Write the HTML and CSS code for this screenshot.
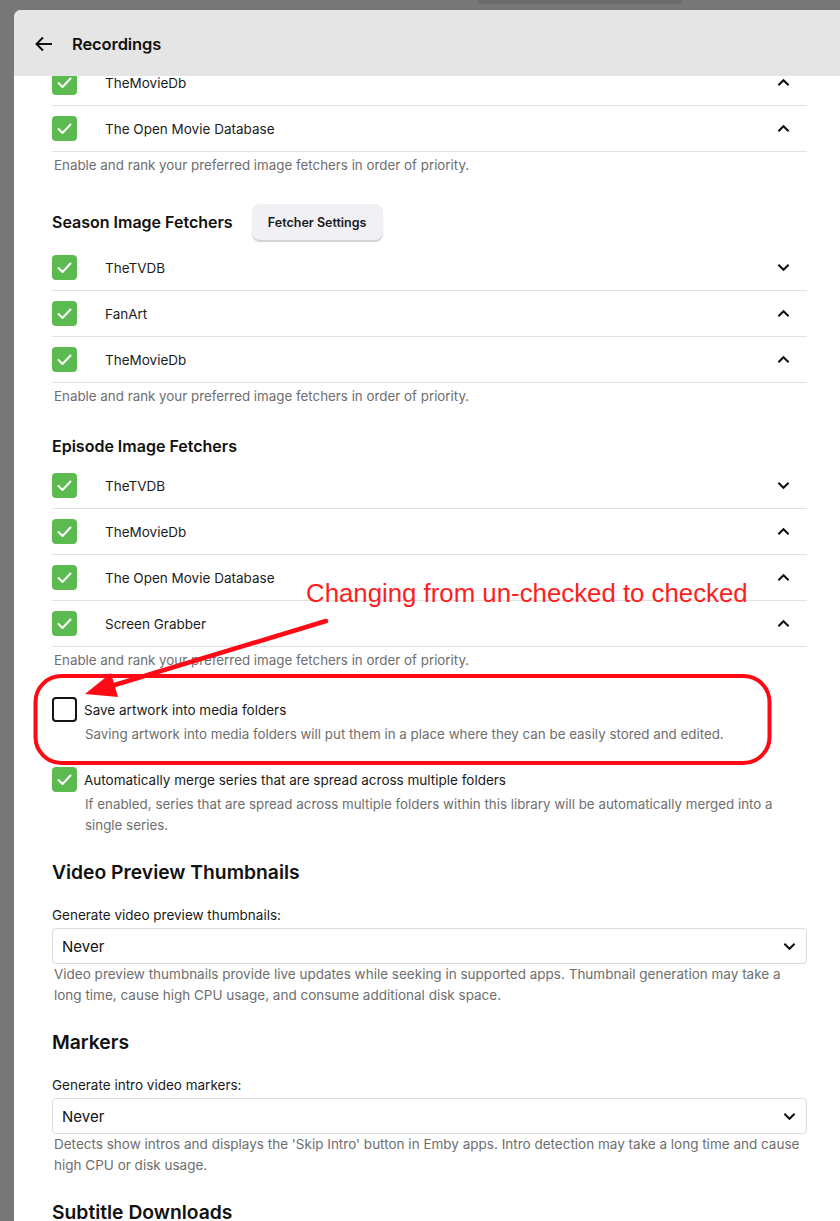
FILE: index.html
```html
<!DOCTYPE html>
<html>
<head>
<meta charset="utf-8">
<link rel="stylesheet" href="styles.css">
</head>
<body>
<div class="topbar"><div class="tab"></div></div>
<div class="panel">
  <header class="header">
    <svg class="back" width="18" height="16" viewBox="0 0 18 16"><path d="M17 8H2M8 1.5L1.5 8L8 14.5" fill="none" stroke="#111" stroke-width="2"/></svg>
    <h1 class="title">Recordings</h1>
  </header>
  <div class="scroll">
    <div class="content">
      <div class="list">
        <div class="row"><span class="cb on"><svg viewBox="0 0 25 25"><path d="M6.5 13L10.5 17L18.5 8.5" /></svg></span><span class="name">TheMovieDb</span><svg class="chev" viewBox="0 0 14 9"><path d="M1.5 7.5L7 2L12.5 7.5"/></svg></div>
        <div class="row"><span class="cb on"><svg viewBox="0 0 25 25"><path d="M6.5 13L10.5 17L18.5 8.5" /></svg></span><span class="name">The Open Movie Database</span><svg class="chev" viewBox="0 0 14 9"><path d="M1.5 7.5L7 2L12.5 7.5"/></svg></div>
      </div>
      <p class="desc">Enable and rank your preferred image fetchers in order of priority.</p>

      <div class="sec-head with-btn"><h2 class="sec-title">Season Image Fetchers</h2><button class="btn">Fetcher Settings</button></div>
      <div class="list">
        <div class="row"><span class="cb on"><svg viewBox="0 0 25 25"><path d="M6.5 13L10.5 17L18.5 8.5" /></svg></span><span class="name">TheTVDB</span><svg class="chev" viewBox="0 0 14 9"><path d="M1.5 1.5L7 7L12.5 1.5"/></svg></div>
        <div class="row"><span class="cb on"><svg viewBox="0 0 25 25"><path d="M6.5 13L10.5 17L18.5 8.5" /></svg></span><span class="name">FanArt</span><svg class="chev" viewBox="0 0 14 9"><path d="M1.5 7.5L7 2L12.5 7.5"/></svg></div>
        <div class="row"><span class="cb on"><svg viewBox="0 0 25 25"><path d="M6.5 13L10.5 17L18.5 8.5" /></svg></span><span class="name">TheMovieDb</span><svg class="chev" viewBox="0 0 14 9"><path d="M1.5 7.5L7 2L12.5 7.5"/></svg></div>
      </div>
      <p class="desc">Enable and rank your preferred image fetchers in order of priority.</p>

      <div class="sec-head"><h2 class="sec-title">Episode Image Fetchers</h2></div>
      <div class="list">
        <div class="row"><span class="cb on"><svg viewBox="0 0 25 25"><path d="M6.5 13L10.5 17L18.5 8.5" /></svg></span><span class="name">TheTVDB</span><svg class="chev" viewBox="0 0 14 9"><path d="M1.5 1.5L7 7L12.5 1.5"/></svg></div>
        <div class="row"><span class="cb on"><svg viewBox="0 0 25 25"><path d="M6.5 13L10.5 17L18.5 8.5" /></svg></span><span class="name">TheMovieDb</span><svg class="chev" viewBox="0 0 14 9"><path d="M1.5 7.5L7 2L12.5 7.5"/></svg></div>
        <div class="row"><span class="cb on"><svg viewBox="0 0 25 25"><path d="M6.5 13L10.5 17L18.5 8.5" /></svg></span><span class="name">The Open Movie Database</span><svg class="chev" viewBox="0 0 14 9"><path d="M1.5 7.5L7 2L12.5 7.5"/></svg></div>
        <div class="row"><span class="cb on"><svg viewBox="0 0 25 25"><path d="M6.5 13L10.5 17L18.5 8.5" /></svg></span><span class="name">Screen Grabber</span><svg class="chev" viewBox="0 0 14 9"><path d="M1.5 7.5L7 2L12.5 7.5"/></svg></div>
      </div>
      <p class="desc">Enable and rank your preferred image fetchers in order of priority.</p>

      <div class="option first">
        <div class="opt-line"><span class="cb off"></span><span class="opt-label">Save artwork into media folders</span></div>
        <p class="opt-desc">Saving artwork into media folders will put them in a place where they can be easily stored and edited.</p>
      </div>
      <div class="option">
        <div class="opt-line"><span class="cb on"><svg viewBox="0 0 25 25"><path d="M6.5 13L10.5 17L18.5 8.5" /></svg></span><span class="opt-label">Automatically merge series that are spread across multiple folders</span></div>
        <p class="opt-desc">If enabled, series that are spread across multiple folders within this library will be automatically merged into a single series.</p>
      </div>

      <h2 class="big-title">Video Preview Thumbnails</h2>
      <label class="field-label">Generate video preview thumbnails:</label>
      <div class="select"><span>Never</span><svg class="chev" viewBox="0 0 14 9"><path d="M1.5 1.5L7 7L12.5 1.5"/></svg></div>
      <p class="field-desc">Video preview thumbnails provide live updates while seeking in supported apps. Thumbnail generation may take a long time, cause high CPU usage, and consume additional disk space.</p>

      <h2 class="big-title">Markers</h2>
      <label class="field-label">Generate intro video markers:</label>
      <div class="select"><span>Never</span><svg class="chev" viewBox="0 0 14 9"><path d="M1.5 1.5L7 7L12.5 1.5"/></svg></div>
      <p class="field-desc">Detects show intros and displays the 'Skip Intro' button in Emby apps. Intro detection may take a long time and cause high CPU or disk usage.</p>

      <h2 class="big-title">Subtitle Downloads</h2>
    </div>
  </div>
</div>

<div class="annot-text">Changing from un-checked to checked</div>
<svg class="annot" width="840" height="1221" viewBox="0 0 840 1221">
  <rect x="35.5" y="676" width="734" height="87" rx="26" ry="26" fill="none" stroke="#ff0a14" stroke-width="4"/>
  <line x1="326" y1="621" x2="108" y2="687" stroke="#ff0a14" stroke-width="4.5" stroke-linecap="round"/>
  <polygon points="85,694 111,673 118,697" fill="#ff0a14"/>
</svg>
</body>
</html>
```

FILE: styles.css
```css
* { box-sizing: border-box; }
html, body { margin: 0; padding: 0; }
body {
  background: #777;
  font-family: Inter, "Noto Sans", sans-serif;
  color: #161616;
  width: 840px;
  height: 1221px;
  overflow: hidden;
  position: relative;
}
.topbar {
  height: 10px;
  position: relative;
}
.tab {
  position: absolute;
  left: 478px;
  top: 0;
  width: 204px;
  height: 4px;
  background: #6b6b6b;
  border-radius: 0 0 8px 8px;
}
.panel {
  margin-left: 14px;
  background: #fff;
  border-top-left-radius: 7px;
  height: 1211px;
  overflow: hidden;
  display: flex;
  flex-direction: column;
}
.header {
  flex: 0 0 66px;
  background: #e5e5e5;
  display: flex;
  align-items: center;
  padding-left: 21px;
  padding-top: 2px;
  position: relative;
  z-index: 2;
}
.back { display: block; margin-right: 19px; }
.title {
  margin: 0;
  font-size: 16.5px;
  font-weight: 600;
  letter-spacing: -0.1px;
  color: #111;
}
.scroll {
  flex: 1;
  overflow: hidden;
}
.content {
  margin-top: -16px;
  padding: 0 33px 0 38px;
}
.row {
  height: 46px;
  border-bottom: 1px solid #e2e2e2;
  display: flex;
  align-items: center;
}
.cb {
  flex: 0 0 25px;
  width: 25px;
  height: 25px;
  border-radius: 4px;
  display: block;
}
.cb.on { background: #5bbb50; }
.cb.on svg { display: block; width: 25px; height: 25px; }
.cb.on path { fill: none; stroke: #fff; stroke-width: 2; stroke-linecap: round; stroke-linejoin: round; }
.cb.off { border: 2px solid #141414; width: 25px; height: 25px; }
.name {
  flex: 1;
  margin-left: 28px;
  font-size: 13.5px;
  color: #1c1c1c;
}
.chev {
  width: 13px;
  height: 9px;
  margin-right: 17px;
  display: block;
}
.chev path { fill: none; stroke: #111; stroke-width: 2.2; }
.desc {
  margin: 4px 0 0 2px;
  font-size: 13.35px;
  line-height: 18px;
  color: #6e6e6e;
}
.sec-head {
  margin-top: 30px;
  display: flex;
  align-items: center;
  height: 20px;
  margin-bottom: 7px;
}
.sec-head.with-btn { height: 36px; margin-bottom: 5px; }
.sec-head:not(.with-btn) { margin-top: 31px; margin-bottom: 7px; }
.sec-title {
  margin: 0;
  font-size: 16px;
  font-weight: 600;
  color: #111;
}
.btn {
  margin-left: 19px;
  height: 36px;
  width: 131px;
  border: none;
  border-radius: 8px;
  background: #f0f0f5;
  box-shadow: 0 1.5px 1px rgba(0,0,0,0.18);
  font-family: Inter, "Noto Sans", sans-serif;
  font-size: 12.5px;
  font-weight: 600;
  color: #1a1a1a;
  padding: 0;
}
.option { margin-top: 22px; }
.option.first { margin-top: 28px; }
.opt-line {
  display: flex;
  align-items: center;
  height: 25px;
}
.opt-label {
  margin-left: 7px;
  font-size: 13.5px;
  color: #1a1a1a;
}
.opt-desc {
  margin: 2px 0 0 33px;
  font-size: 13.35px;
  line-height: 21px;
  color: #6e6e6e;
}
.big-title {
  margin: 23px 0 0 0;
  font-size: 19.3px;
  line-height: 26px;
  font-weight: 600;
  color: #111;
}
.field-label {
  display: block;
  margin-top: 20px;
  font-size: 13.5px;
  line-height: 20px;
  color: #1a1a1a;
}
.select {
  margin-top: 3px;
  height: 36px;
  border: 1px solid #dcdcdc;
  border-radius: 4px;
  display: flex;
  align-items: center;
  justify-content: space-between;
  padding-left: 9px;
  font-size: 15px;
  color: #111;
}
.select .chev { margin-right: 10px; }
.field-desc {
  margin: 0 0 0 2px;
  font-size: 13.5px;
  line-height: 21px;
  color: #6e6e6e;
}
.annot-text {
  position: absolute;
  left: 306px;
  top: 579px;
  font-family: "Liberation Sans", Arial, sans-serif;
  font-size: 25.8px;
  color: #ff1e1e;
  white-space: nowrap;
  z-index: 5;
}
.annot {
  position: absolute;
  left: 0;
  top: 0;
  pointer-events: none;
  z-index: 6;
}
```
